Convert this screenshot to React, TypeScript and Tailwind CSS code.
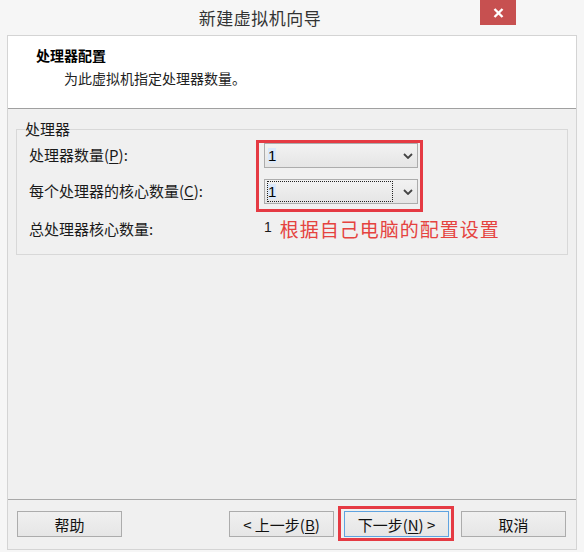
import React from 'react';

const cjk = { fontFamily: '"Noto Sans CJK SC", "Liberation Sans", sans-serif' };

function Chevron() {
  return (
    <svg width="10" height="6" viewBox="0 0 10 6" className="shrink-0">
      <path d="M1 1 L5 5 L9 1" fill="none" stroke="#444" strokeWidth="1.8" />
    </svg>
  );
}

function Select({ focused }: { focused?: boolean }) {
  return (
    <div className="w-[154px] h-[25px] border border-[#acacac] bg-gradient-to-b from-[#f2f2f2] to-[#e5e5e5] flex items-center pl-[2px] pr-[4px]">
      <div
        className={`flex-1 h-[21px] flex items-center mr-[10px] ${
          focused ? 'border border-dotted border-[#222]' : 'border border-transparent'
        }`}
      >
        <span className="text-[15px] leading-none text-black bg-[#d9e8fb]" style={{ fontFamily: '"Liberation Sans", sans-serif' }}>
          1
        </span>
      </div>
      <Chevron />
    </div>
  );
}

function Button({ children, focused }: { children: React.ReactNode; focused?: boolean }) {
  return (
    <button
      className={`w-[105px] h-[26px] text-[15px] leading-none text-[#111] bg-gradient-to-b from-[#f0f0f0] to-[#e6e6e6] border ${
        focused ? 'border-[#5fa3e0]' : 'border-[#acacac]'
      }`}
    >
      {children}
    </button>
  );
}

export default function App() {
  return (
    <div className="w-[584px] h-[552px] bg-[#f6f6f6] flex flex-col text-[#1a1a1a]" style={cjk}>
      {/* Title bar */}
      <div className="relative h-[35px] flex items-center justify-center pr-[64px] shrink-0">
        <span className="text-[17px] text-[#333] tracking-[0.5px]">新建虚拟机向导</span>
        <div className="absolute left-[480px] top-0 w-[36px] h-[25px] bg-[#c75050] flex items-center justify-center">
          <svg width="11" height="10" viewBox="0 0 11 10">
            <path d="M1.5 1 L9.5 9 M9.5 1 L1.5 9" stroke="#fff" strokeWidth="2.4" />
          </svg>
        </div>
      </div>

      {/* Content */}
      <div className="mx-[7px] h-[515px] border border-[#d4d4d4] flex flex-col">
        {/* Header */}
        <div className="h-[73px] bg-white border-b border-[#a0a0a0] pl-[28px] pt-[10px] shrink-0">
          <div className="text-[14px] leading-[18px] font-bold text-black">处理器配置</div>
          <div className="text-[14px] leading-[18px] text-[#222] mt-[5px] pl-[28px]">为此虚拟机指定处理器数量。</div>
        </div>

        {/* Body */}
        <div className="flex-1 bg-[#f0f0f0] px-[8px] pt-[11px]">
          <fieldset className="border border-[#d8d8d8] pl-[12px] pb-[13px]">
            <legend className="text-[15px] leading-[18px] ml-[-4px] px-[0px]">处理器</legend>
            <div className="pt-[5px] flex flex-col">
              <div className="relative flex flex-col gap-[11px]">
                <div className="flex items-center h-[25px]">
                  <span className="w-[235px] text-[15px]">
                    处理器数量(<span className="underline underline-offset-2">P</span>):
                  </span>
                  <Select />
                </div>
                <div className="flex items-center h-[25px]">
                  <span className="w-[235px] text-[15px]">
                    每个处理器的核心数量(<span className="underline underline-offset-2">C</span>):
                  </span>
                  <Select focused />
                </div>
                {/* annotation box */}
                <div className="absolute left-[227px] top-[-3px] w-[167px] h-[72px] border-[3px] border-[#e53a43] pointer-events-none" />
              </div>
              <div className="flex items-start h-[25px] mt-[12px]">
                <span className="w-[235px] text-[15px] leading-[25px]">总处理器核心数量:</span>
                <span className="text-[14px] leading-none mt-[4px]" style={{ fontFamily: '"Liberation Sans", sans-serif' }}>1</span>
                <span className="ml-[8px] text-[19px] leading-[24px] tracking-[1px] text-[#e5433f] mt-[1px]">
                  根据自己电脑的配置设置
                </span>
              </div>
            </div>
          </fieldset>
        </div>

        {/* Footer */}
        <div className="h-[50px] bg-[#f0f0f0] border-t border-[#a8a8a8] shrink-0 flex items-start pt-[11px] pl-[9px] pr-[10px]">
          <Button>帮助</Button>
          <div className="flex-1" />
          <Button>
            &lt; 上一步(<span className="underline underline-offset-2">B</span>)
          </Button>
          <div className="relative ml-[10px]">
            <Button focused>
              下一步(<span className="underline underline-offset-2">N</span>) &gt;
            </Button>
            <div className="absolute left-[-6px] top-[-5px] w-[116px] h-[35px] border-[3px] border-[#e53a43] pointer-events-none" />
          </div>
          <div className="ml-[12px]">
            <Button>取消</Button>
          </div>
        </div>
      </div>
    </div>
  );
}
